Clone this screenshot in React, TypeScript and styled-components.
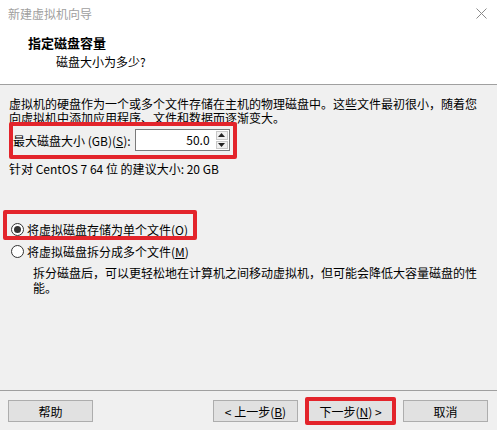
import styled, { createGlobalStyle } from "styled-components";

const GlobalStyle = createGlobalStyle`
  html, body {
    margin: 0;
    padding: 0;
    background: #f0f0f0;
  }
  body {
    font-family: "Noto Sans CJK SC", "Microsoft YaHei", sans-serif;
    font-size: 12px;
    color: #000;
  }
`;

const Dialog = styled.div`
  width: 497px;
  height: 430px;
  display: flex;
  flex-direction: column;
  background: #f0f0f0;
  overflow: hidden;
`;

const Header = styled.header`
  height: 85px;
  background: #fff;
  border-bottom: 1px solid #a0a0a0;
  box-sizing: border-box;
  display: flex;
  flex-direction: column;
`;

const TitleBar = styled.div`
  height: 26px;
  display: flex;
  align-items: center;
  justify-content: space-between;
  padding: 0 10px 0 8px;
  color: #a0a0a0;
  font-size: 12px;
`;

const Heading = styled.h1`
  margin: 9px 0 0 28px;
  font-size: 13px;
  line-height: 16px;
  font-weight: bold;
`;

const SubHeading = styled.div`
  margin: 3px 0 0 56px;
  line-height: 16px;
`;

const Body = styled.main`
  padding: 12px 9px 0;
  display: flex;
  flex-direction: column;
  align-items: flex-start;
`;

const Text = styled.p<{ $indent?: number; $lh?: number }>`
  margin: 0;
  margin-left: ${(p) => p.$indent ?? 0}px;
  line-height: ${(p) => p.$lh ?? 14}px;
  white-space: nowrap;
`;

const Highlight = styled.div<{ $inset: string }>`
  position: relative;
  &::after {
    content: "";
    position: absolute;
    inset: ${(p) => p.$inset};
    border: 4px solid #e3242b;
    border-radius: 2px;
    pointer-events: none;
  }
`;

const SizeRow = styled.div`
  display: flex;
  align-items: center;
  gap: 4px;
  height: 22px;
  padding-left: 4px;
`;

const Key = styled.span`
  text-decoration: underline;
`;

const SpinBox = styled.div`
  width: 95px;
  height: 22px;
  box-sizing: border-box;
  border: 1px solid #7a7a7a;
  background: #fff;
  display: flex;
`;

const SpinValue = styled.div`
  flex: 1;
  text-align: right;
  padding-right: 5px;
  line-height: 20px;
`;

const SpinButtons = styled.div`
  width: 14px;
  display: flex;
  flex-direction: column;
  gap: 1px;
  padding: 1px;
  box-sizing: border-box;
`;

const SpinButton = styled.div`
  flex: 1;
  background: #f0f0f0;
  border: 1px solid #c8c8c8;
  display: flex;
  align-items: center;
  justify-content: center;
`;

const RadioRow = styled.label`
  display: inline-flex;
  align-items: center;
  gap: 3px;
  height: 16px;
  padding-left: 2px;
`;

const Radio = styled.span<{ $checked?: boolean }>`
  width: 13px;
  height: 13px;
  box-sizing: border-box;
  border-radius: 50%;
  border: 1px solid #333;
  background: #fff;
  display: flex;
  align-items: center;
  justify-content: center;
  &::before {
    content: "";
    width: 7px;
    height: 7px;
    border-radius: 50%;
    background: ${(p) => (p.$checked ? "#333" : "transparent")};
  }
`;

const Footer = styled.footer`
  margin-top: auto;
  border-top: 1px solid #a0a0a0;
  padding: 9px 9px 8px 8px;
  display: flex;
  gap: 10px;
`;

const Spacer = styled.div`
  flex: 1;
`;

const Button = styled.button`
  width: 85px;
  height: 22px;
  box-sizing: border-box;
  border: 1px solid #adadad;
  background: #e1e1e1;
  font-family: inherit;
  font-size: 12px;
  padding: 0;
  color: #000;
`;

export default function App() {
  return (
    <>
      <GlobalStyle />
      <Dialog>
        <Header>
          <TitleBar>
            <span>新建虚拟机向导</span>
            <svg width="11" height="11" viewBox="0 0 11 11">
              <path d="M0.5 0.5 L10.5 10.5 M10.5 0.5 L0.5 10.5" stroke="#8a8a8a" strokeWidth="1" />
            </svg>
          </TitleBar>
          <Heading>指定磁盘容量</Heading>
          <SubHeading>磁盘大小为多少?</SubHeading>
        </Header>

        <Body>
          <Text>
            虚拟机的硬盘作为一个或多个文件存储在主机的物理磁盘中。这些文件最初很小，随着您
            <br />
            向虚拟机中添加应用程序、文件和数据而逐渐变大。
          </Text>

          <Highlight $inset="-7px -7px -8px 0px" style={{ marginTop: 4 }}>
            <SizeRow>
              <span>
                最大磁盘大小 (GB)(<Key>S</Key>):
              </span>
              <SpinBox>
                <SpinValue>50.0</SpinValue>
                <SpinButtons>
                  <SpinButton>
                    <svg width="7" height="4" viewBox="0 0 7 4">
                      <path d="M3.5 0 L7 4 L0 4 Z" fill="#222" />
                    </svg>
                  </SpinButton>
                  <SpinButton>
                    <svg width="7" height="4" viewBox="0 0 7 4">
                      <path d="M0 0 L7 0 L3.5 4 Z" fill="#222" />
                    </svg>
                  </SpinButton>
                </SpinButtons>
              </SpinBox>
            </SizeRow>
          </Highlight>

          <Text style={{ marginTop: 11 }}>针对 CentOS 7 64 位 的建议大小: 20 GB</Text>

          <Highlight $inset="-9px -9px -2px -6px" style={{ marginTop: 43 }}>
            <RadioRow>
              <Radio $checked />
              <span>
                将虚拟磁盘存储为单个文件(<Key>O</Key>)
              </span>
            </RadioRow>
          </Highlight>

          <RadioRow style={{ marginTop: 6 }}>
            <Radio />
            <span>
              将虚拟磁盘拆分成多个文件(<Key>M</Key>)
            </span>
          </RadioRow>

          <Text $indent={24} $lh={15} style={{ marginTop: 5 }}>
            拆分磁盘后，可以更轻松地在计算机之间移动虚拟机，但可能会降低大容量磁盘的性
            <br />
            能。
          </Text>
        </Body>

        <Footer>
          <Button>帮助</Button>
          <Spacer />
          <Button>
            &lt; 上一步(<Key>B</Key>)
          </Button>
          <Highlight $inset="-3px">
            <Button>
              下一步(<Key>N</Key>) &gt;
            </Button>
          </Highlight>
          <Button>取消</Button>
        </Footer>
      </Dialog>
    </>
  );
}
